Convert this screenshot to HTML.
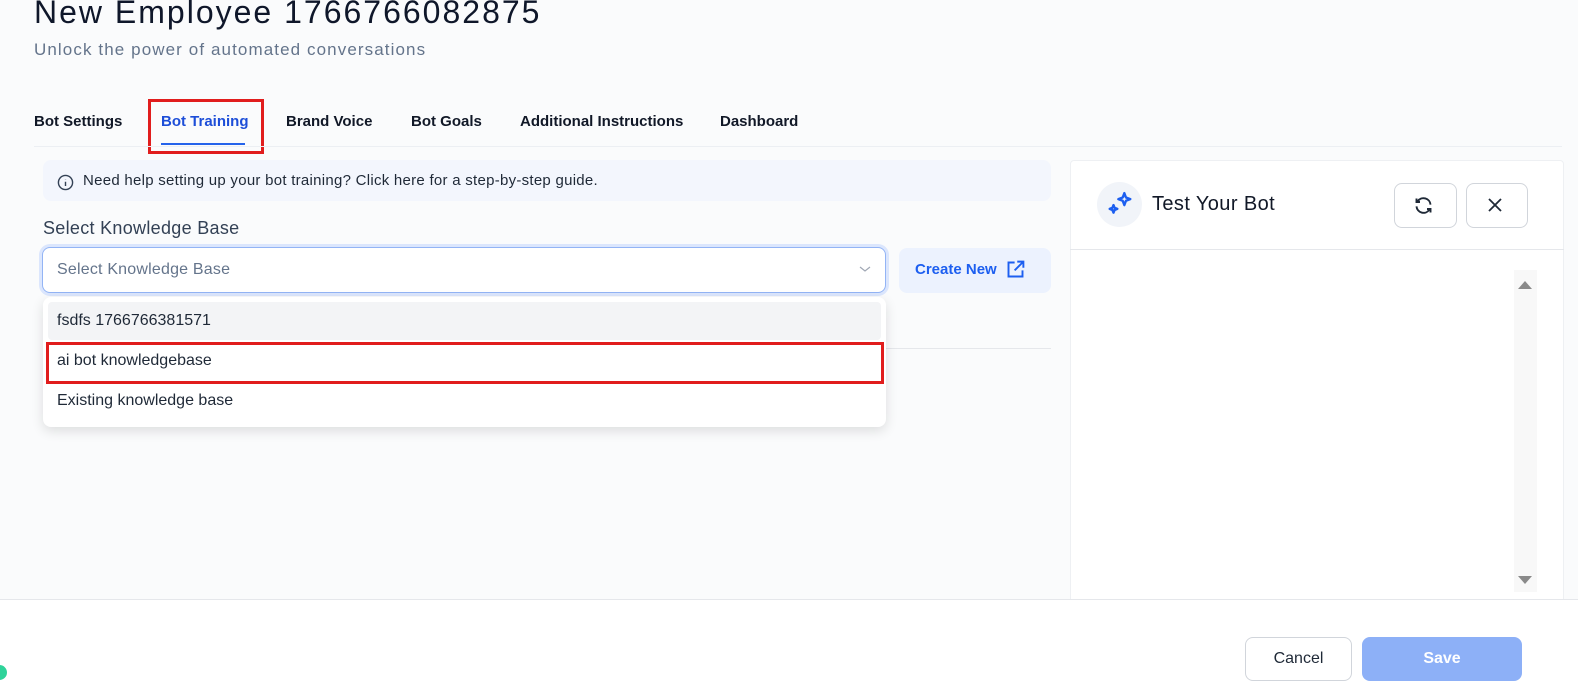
<!DOCTYPE html>
<html><head><style>
*{box-sizing:border-box;margin:0;padding:0}
body{width:1578px;height:697px;overflow:hidden;background:#fafbfc;font-family:"Liberation Sans",sans-serif;position:relative;color:#111827}
.abs{position:absolute}
h1{position:absolute;left:34px;top:-6px;font-size:32px;font-weight:400;color:#0f172a;letter-spacing:2px}
.sub{left:34px;top:40px;font-size:17px;color:#64748b;letter-spacing:1.1px}
.tab{top:113px;font-size:15px;font-weight:700;color:#111827}
</style></head><body>
<h1>New Employee 1766766082875</h1>
<div class="abs sub">Unlock the power of automated conversations</div>
<div class="abs tab" style="left:34px">Bot Settings</div>
<div class="abs tab" style="left:161px;color:#1d4ed8">Bot Training</div>
<div class="abs" style="left:161px;top:143px;width:84px;height:2px;background:#2563eb"></div>
<div class="abs" style="left:148px;top:99px;width:116px;height:55px;border:3px solid #e11d1d"></div>
<div class="abs tab" style="left:286px">Brand Voice</div>
<div class="abs tab" style="left:411px">Bot Goals</div>
<div class="abs tab" style="left:520px">Additional Instructions</div>
<div class="abs tab" style="left:720px">Dashboard</div>
<div class="abs" style="left:34px;top:146px;width:1528px;height:1px;background:#eceff3"></div>

<div class="abs" style="left:43px;top:160px;width:1008px;height:41px;background:#f3f6fd;border-radius:8px"></div>
<svg class="abs" style="left:57px;top:174px" width="17" height="17" viewBox="0 0 24 24" fill="none" stroke="#334155" stroke-width="2"><circle cx="12" cy="12" r="10"/><path d="M12 11v6M12 7.5v.5"/></svg>
<div class="abs" style="left:83px;top:172px;font-size:15px;color:#1f2937;letter-spacing:.27px">Need help setting up your bot training? Click here for a step-by-step guide.</div>
<div class="abs" style="left:43px;top:218px;font-size:18px;color:#334155;letter-spacing:.3px">Select Knowledge Base</div>
<div class="abs" style="left:42px;top:247px;width:844px;height:46px;border:1.5px solid #93b4f5;box-shadow:0 0 0 3px #dbe6fd;border-radius:8px;background:#fff"></div>
<div class="abs" style="left:57px;top:261px;font-size:16px;color:#64748b;letter-spacing:.2px">Select Knowledge Base</div>
<svg class="abs" style="left:858px;top:264px" width="14" height="10" viewBox="0 0 14 10" fill="none" stroke="#a0a7b4" stroke-width="1.2"><path d="M2 3l5 4 5-4"/></svg>
<div class="abs" style="left:899px;top:248px;width:152px;height:45px;background:#ecf2fe;border-radius:8px"></div>
<div class="abs" style="left:915px;top:261px;font-size:15px;font-weight:700;color:#1d5ff0">Create New</div>
<svg class="abs" style="left:1005px;top:259px" width="21" height="21" viewBox="0 0 24 24" fill="none" stroke="#1d5ff0" stroke-width="2.2"><path d="M11 4H4v16h16v-7M14 3h7v7M21 3L11 13"/></svg>
<div class="abs" style="left:43px;top:348px;width:1008px;height:1px;background:#e5e7eb"></div>

<div class="abs" style="left:43px;top:297px;width:843px;height:130px;background:#fff;border-radius:8px;box-shadow:0 4px 12px rgba(0,0,0,.12)"></div>
<div class="abs" style="left:48px;top:302px;width:833px;height:38px;background:#f3f4f6;border-radius:4px"></div>
<div class="abs" style="left:57px;top:312px;font-size:16px;color:#1f2937">fsdfs 1766766381571</div>
<div class="abs" style="left:46px;top:342px;width:838px;height:42px;border:3px solid #e11d1d"></div>
<div class="abs" style="left:57px;top:352px;font-size:16px;color:#1f2937">ai bot knowledgebase</div>
<div class="abs" style="left:57px;top:392px;font-size:16px;color:#1f2937">Existing knowledge base</div>

<div class="abs" style="left:1070px;top:160px;width:494px;height:460px;background:#fff;border:1px solid #eef0f3;border-radius:4px"></div>
<div class="abs" style="left:1070px;top:249px;width:494px;height:1px;background:#e5e7eb"></div>
<div class="abs" style="left:1097px;top:182px;width:45px;height:45px;border-radius:50%;background:#f1f4f9"></div>
<svg class="abs" style="left:1107px;top:191px" width="26" height="26" viewBox="0 0 24 24" fill="none" stroke="#1d5ff0" stroke-width="2.2" stroke-linejoin="round"><path d="M16 2l1.5 4 4 1.5-4 1.5L16 13l-1.5-4-4-1.5 4-1.5z"/><path d="M6 13l1 2.5 2.5 1-2.5 1L6 20l-1-2.5-2.5-1 2.5-1z"/></svg>
<div class="abs" style="left:1152px;top:193px;font-size:20px;color:#111827;letter-spacing:.4px">Test Your Bot</div>
<div class="abs" style="left:1394px;top:183px;width:63px;height:45px;border:1px solid #d1d5db;border-radius:8px;background:#fff"></div>
<svg class="abs" style="left:1413px;top:195px" width="21" height="21" viewBox="0 0 24 24" fill="none" stroke="#1f2937" stroke-width="2.2"><path d="M20 11a8 8 0 0 0-14.5-4M4 4v4h4M4 13a8 8 0 0 0 14.5 4M20 20v-4h-4"/></svg>
<div class="abs" style="left:1466px;top:183px;width:62px;height:45px;border:1px solid #d1d5db;border-radius:8px;background:#fff"></div>
<svg class="abs" style="left:1487px;top:197px" width="16" height="16" viewBox="0 0 16 16" stroke="#1f2937" stroke-width="1.8"><path d="M2 2l12 12M14 2L2 14"/></svg>
<div class="abs" style="left:1514px;top:270px;width:23px;height:322px;background:#f8f8f8"></div>
<div class="abs" style="left:1518px;top:281px;border:7px solid transparent;border-bottom:8px solid #8a8a8a;border-top:0"></div>
<div class="abs" style="left:1518px;top:576px;border:7px solid transparent;border-top:8px solid #8a8a8a;border-bottom:0"></div>

<div class="abs" style="left:0;top:599px;width:1578px;height:98px;background:#fff;border-top:1px solid #e5e7eb"></div>
<div class="abs" style="left:1245px;top:637px;width:107px;height:44px;border:1px solid #d1d5db;border-radius:8px;background:#fff;font-size:16px;color:#1f2937;text-align:center;line-height:42px">Cancel</div>
<div class="abs" style="left:1362px;top:637px;width:160px;height:44px;border-radius:8px;background:#8db0f7;font-size:16px;font-weight:700;color:#fff;text-align:center;line-height:44px">Save</div>
<div class="abs" style="left:-8px;top:665px;width:15px;height:15px;border-radius:50%;background:#2fd39a"></div>
</body></html>
